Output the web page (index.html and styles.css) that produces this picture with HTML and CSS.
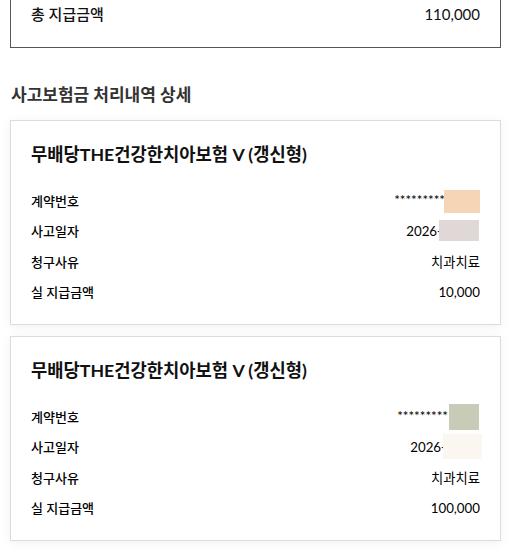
FILE: index.html
```html
<!DOCTYPE html>
<html lang="ko">
<head>
<meta charset="utf-8">
<link rel="stylesheet" href="styles.css">
</head>
<body>
<div class="page">
  <div class="total-box">
    <span class="total-label">총 지급금액</span>
    <span class="total-value">110,000</span>
  </div>

  <h2 class="section-title">사고보험금 처리내역 상세</h2>

  <div class="card">
    <h3 class="card-title">무배당THE건강한치아보험 V (갱신형)</h3>
    <div class="row"><span class="label">계약번호</span><span class="value">*********<span class="mask m1"></span></span></div>
    <div class="row"><span class="label">사고일자</span><span class="value">2026-<span class="mask m2"></span></span></div>
    <div class="row"><span class="label">청구사유</span><span class="value">치과치료</span></div>
    <div class="row"><span class="label">실 지급금액</span><span class="value">10,000</span></div>
  </div>

  <div class="card">
    <h3 class="card-title">무배당THE건강한치아보험 V (갱신형)</h3>
    <div class="row"><span class="label">계약번호</span><span class="value">*********<span class="mask m3"></span></span></div>
    <div class="row"><span class="label">사고일자</span><span class="value">2026-<span class="mask m4"></span></span></div>
    <div class="row"><span class="label">청구사유</span><span class="value">치과치료</span></div>
    <div class="row"><span class="label">실 지급금액</span><span class="value">100,000</span></div>
  </div>
</div>
</body>
</html>
```

FILE: styles.css
```css
* { box-sizing: border-box; }
html, body { margin: 0; padding: 0; background: #fff; }
body {
  font-family: Lato, "Noto Sans CJK KR", sans-serif;
  color: #111;
  overflow: hidden;
}
.page {
  padding: 0 10px;
}
.total-box {
  margin-top: -20px;
  border: 1px solid #555;
  padding: 23px 20px 23px;
  display: flex;
  justify-content: space-between;
  align-items: center;
  font-size: 15px;
  line-height: 20px;
}
.total-label { font-weight: 500; }
.section-title {
  margin: 36px 0 14px 1px;
  font-size: 17px;
  line-height: 22px;
  font-weight: 700;
  color: #333;
}
.card {
  border: 1px solid #dcdcdc;
  background: #fff;
  box-shadow: 0 2px 10px rgba(0,0,0,0.06);
  padding: 22px 20px 17px;
  margin-bottom: 11px;
}
.card-title {
  margin: 0 0 18px;
  font-size: 17.7px;
  line-height: 24px;
  font-weight: 700;
  color: #111;
}
.row {
  height: 30.5px;
  display: flex;
  justify-content: space-between;
  align-items: center;
  font-size: 13px;
}
.label { font-weight: 500; color: #000; }
.value {
  display: flex;
  align-items: center;
  font-size: 13.3px;
  color: #000;
}
.mask { display: inline-block; }
.m1 { width: 36px; height: 23px; background: #f5d5b6; margin-top: 3px; margin-left: -1px; }
.m2 { width: 40px; height: 21px; background: #e0d7d7; margin-left: -3px; margin-right: 1px; }
.m3 { width: 30px; height: 26px; background: #c8cbb5; margin-top: 2px; margin-left: 1px; margin-right: 1px; }
.m4 { width: 39px; height: 25px; background: #fbf6f0; margin-left: -3px; margin-right: -2px; }
```
